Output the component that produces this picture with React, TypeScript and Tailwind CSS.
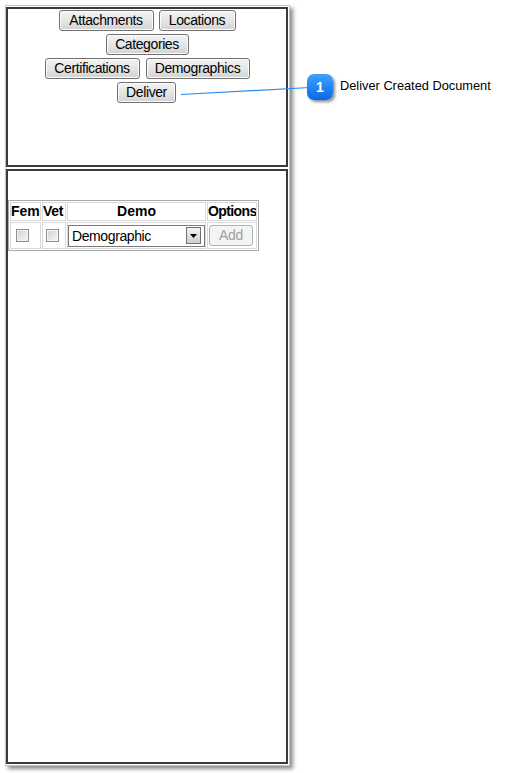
import React from "react";

const font = { fontFamily: '"Liberation Sans", Arial, sans-serif' };

function Btn({ label, w }: { label: string; w: string }) {
  return (
    <button
      className={`${w} h-[21px] border border-[#707070] rounded-[3px] bg-gradient-to-b from-[#f3f3f3] via-[#e6e6e6] to-[#d2d2d2] text-[14px] tracking-[-0.4px] leading-[19px] text-black text-center p-0 shadow-[inset_0_0_0_1px_#fcfcfc]`}
    >
      {label}
    </button>
  );
}

function Check({ ml }: { ml: string }) {
  return (
    <div className={`${ml} w-[13px] h-[13px] border border-[#8e8f8f] bg-[#f4f4f4] p-[1px]`}>
      <div className="w-full h-full bg-gradient-to-br from-[#d4d4d4] to-[#f6f6f6]" />
    </div>
  );
}

export default function App() {
  return (
    <div className="relative w-[506px] h-[773px] bg-white overflow-hidden" style={font}>
      <div className="ml-[5px] pt-[5px]">
        <div className="w-[285px] h-[761px] border border-[#c4c4c4] bg-white pt-[1px] pr-[1px] pb-[1px] flex flex-col gap-[2px] shadow-[3px_3px_4px_rgba(0,0,0,0.45)]">
          <div className="h-[160px] border-2 border-[#3a3a3a] flex flex-col items-center pt-[1px] gap-[3px]">
            <div className="flex gap-[5px]">
              <Btn label="Attachments" w="w-[95px]" />
              <Btn label="Locations" w="w-[77px]" />
            </div>
            <div className="flex">
              <Btn label="Categories" w="w-[83px]" />
            </div>
            <div className="flex gap-[6px]">
              <Btn label="Certifications" w="w-[95px]" />
              <Btn label="Demographics" w="w-[104px]" />
            </div>
            <div className="flex pr-[1px]">
              <Btn label="Deliver" w="w-[59px]" />
            </div>
          </div>
          <div className="flex-1 border-2 border-[#3a3a3a] pt-[29px]">
            <table
              className="table-fixed w-[249px] border border-[#a8a8a8] border-separate text-[14px] text-black"
              style={{ borderSpacing: "1px" }}
            >
              <colgroup>
                <col className="w-[31px]" />
                <col className="w-[24px]" />
                <col className="w-[139px]" />
                <col className="w-[50px]" />
              </colgroup>
              <thead>
                <tr className="h-[19px]">
                  <th className="border border-[#d8d8d8] p-0 leading-[17px] font-bold text-left whitespace-nowrap">Fem</th>
                  <th className="border border-[#d8d8d8] p-0 leading-[17px] font-bold text-left whitespace-nowrap tracking-[-0.3px]">Vet</th>
                  <th className="border border-[#d8d8d8] p-0 leading-[17px] font-bold text-center">Demo</th>
                  <th className="border border-[#d8d8d8] p-0 leading-[17px] font-bold text-center whitespace-nowrap overflow-hidden tracking-[-0.6px]">Options</th>
                </tr>
              </thead>
              <tbody>
                <tr className="h-[27px]">
                  <td className="border border-[#d8d8d8] p-0 align-middle"><Check ml="ml-[5px]" /></td>
                  <td className="border border-[#d8d8d8] p-0 align-middle"><Check ml="ml-[3px]" /></td>
                  <td className="border border-[#d8d8d8] p-0 align-middle">
                    <div className="flex items-center w-[137px] h-[22px] border border-[#7a7a7a] bg-white">
                      <span className="flex-1 pl-[3px] leading-[20px] text-[14px] tracking-[-0.4px]">Demographic</span>
                      <div className="w-[15px] h-[17px] mr-[3px] border border-[#707070] bg-gradient-to-b from-[#f2f2f2] to-[#cfcfcf] flex items-center justify-center">
                        <svg width="7" height="4" viewBox="0 0 7 4">
                          <path d="M0 0 H7 L3.5 4 Z" fill="#000" />
                        </svg>
                      </div>
                    </div>
                  </td>
                  <td className="border border-[#d8d8d8] p-0 align-middle">
                    <div className="ml-[1px] w-[44px] h-[21px] border border-[#adb2b5] rounded-[3px] bg-[#f4f4f4] text-[#a0a0a0] text-[14px] tracking-[-0.3px] leading-[19px] text-center">
                      Add
                    </div>
                  </td>
                </tr>
              </tbody>
            </table>
          </div>
        </div>
      </div>

      <svg className="absolute left-0 top-0 pointer-events-none" width="506" height="773">
        <line x1="181" y1="94.5" x2="310" y2="87.5" stroke="#2a8cf0" strokeWidth="1.2" />
      </svg>
      <div className="absolute left-[307px] top-[74px] w-[26px] h-[26px] rounded-[7px] bg-gradient-to-b from-[#3da2ff] to-[#0868e6] shadow-[2px_2px_3px_rgba(0,0,0,0.45)] flex items-center justify-center text-white font-bold text-[14px]">
        1
      </div>
      <div className="absolute left-[340px] top-[78px] text-[12.8px] leading-[16px] text-black whitespace-nowrap">
        Deliver Created Document
      </div>
    </div>
  );
}
